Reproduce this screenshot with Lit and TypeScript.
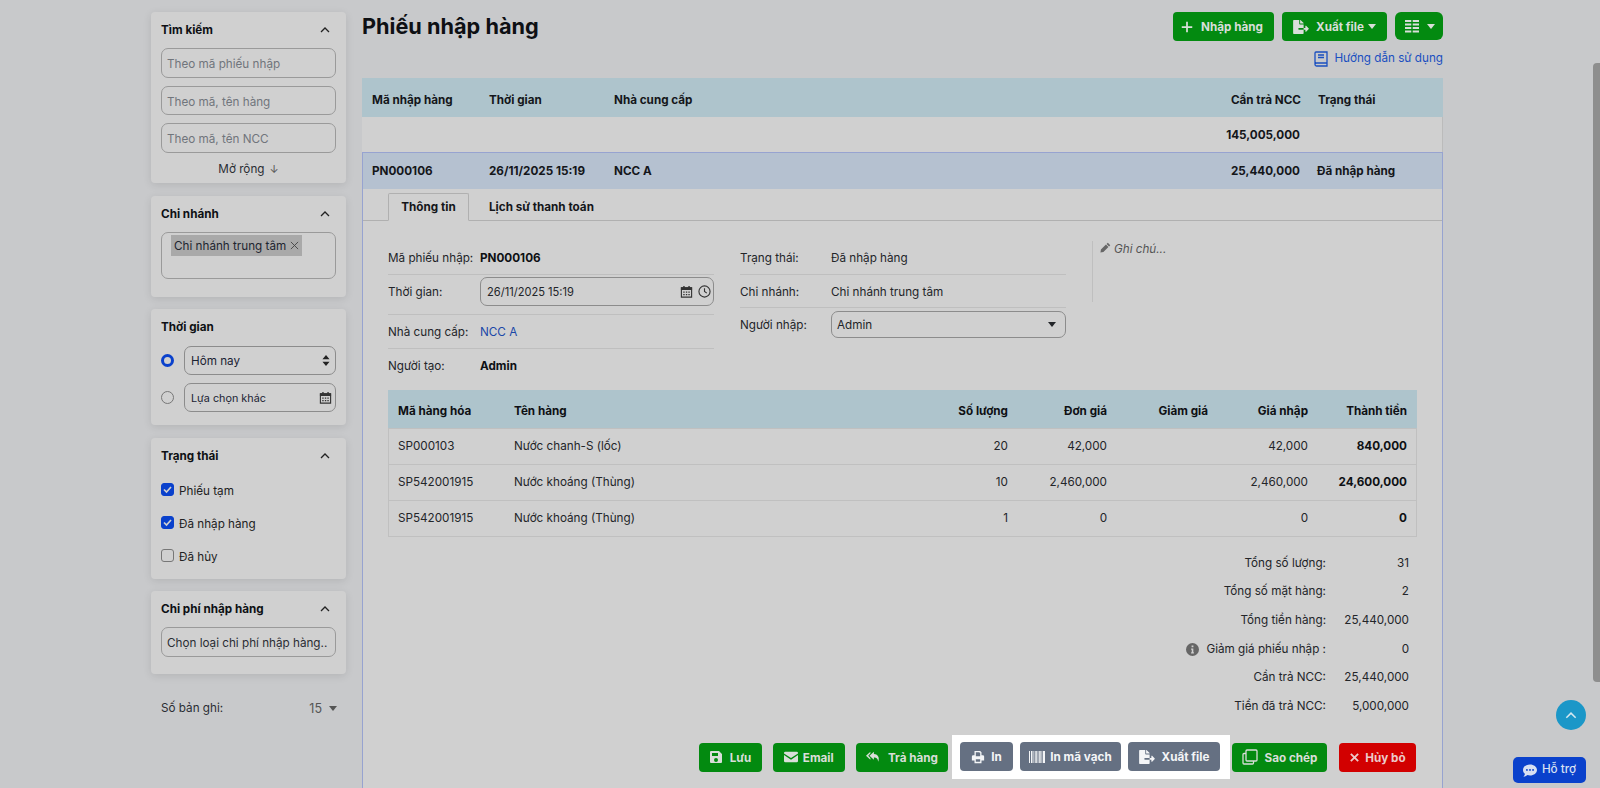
import { LitElement, html, css, svg } from "lit";
import { customElement } from "lit/decorators.js";

const icons: Record<string, any> = {
  plus: svg`<svg class="ic" viewBox="0 0 16 16"><path d="M8 2v12M2 8h12" stroke="currentColor" stroke-width="2" fill="none"/></svg>`,
  file: svg`<svg class="ic w" viewBox="0 0 576 512"><path fill="currentColor" d="M384 121.9c0-6.3-2.5-12.4-7-16.9L279.1 7c-4.5-4.5-10.6-7-17-7H256v128h128v-6.1zM192 336v-32c0-8.84 7.16-16 16-16h176V160H248c-13.2 0-24-10.8-24-24V0H24C10.7 0 0 10.7 0 24v464c0 13.3 10.7 24 24 24h336c13.3 0 24-10.7 24-24V352H208c-8.84 0-16-7.16-16-16zm379.05-28.02l-95.7-96.4c-10.06-10.14-27.36-3.01-27.36 11.27V288H384v64h63.99v65.18c0 14.28 17.29 21.41 27.36 11.27l95.7-96.4c6.6-6.66 6.6-17.4 0-24.07z"/></svg>`,
  list: svg`<svg class="ic w" viewBox="0 0 16 14"><path fill="currentColor" d="M1 1h6.300v2H1zM8.700 1H15v2H8.700zM1 4.500h6.300v2H1zM8.700 4.500H15v2H8.700zM1 8h6.300v2H1zM8.700 8H15v2H8.700zM1 11.500h6.300v2H1zM8.700 11.500H15v2H8.700z"/></svg>`,
  save: svg`<svg class="ic" viewBox="0 0 14 14"><path fill="currentColor" fill-rule="evenodd" d="M2 1h8l3 3v8a1 1 0 0 1-1 1H2a1 1 0 0 1-1-1V2a1 1 0 0 1 1-1zm1 2v3h6V3zm4 5a2 2 0 1 0 0 4 2 2 0 0 0 0-4z"/></svg>`,
  mail: svg`<svg class="ic" viewBox="0 0 16 12"><path fill="currentColor" d="M1.500 0h13A1.500 1.500 0 0 1 16 1.500v.4L8 7.200 0 1.900v-.4A1.500 1.500 0 0 1 1.500 0zM0 3.700l8 5.300 8-5.300v6.800a1.500 1.500 0 0 1-1.500 1.500h-13A1.500 1.500 0 0 1 0 10.500z"/></svg>`,
  reply: svg`<svg class="ic" viewBox="0 0 16 14"><path fill="currentColor" d="M5 1 0 5.500 5 10V8L2.500 5.500 5 3zM9 1 4 5.500 9 10V7.500c3 0 4.500 1 5 5 1.500-4.500.5-8.500-5-9z"/></svg>`,
  print: svg`<svg class="ic" viewBox="0 0 16 16"><path fill="currentColor" fill-rule="evenodd" d="M4 1h6.500L12 2.500V6h1.500A1.500 1.500 0 0 1 15 7.500V12h-3v3H4v-3H1V7.500A1.500 1.500 0 0 1 2.500 6H4zm1.500 1.500V7h5V3h-.8V2.500zm0 8v3h5v-3z"/></svg>`,
  barcode: svg`<svg class="ic w" viewBox="0 0 16 12"><path fill="currentColor" d="M0 0h1v12H0zM2 0h1.500v12H2zM4.500 0h.8v12h-.8zM6.300 0h1.500v12H6.300zM8.600 0h.8v12h-.8zM10.200 0h1.500v12h-1.500zM12.500 0h.8v12h-.8zM14 0h2v12h-2z"/></svg>`,
  clone: svg`<svg class="ic lg" viewBox="0 0 16 16"><path fill="none" stroke="currentColor" stroke-width="1.300" d="M5 1h9a1 1 0 0 1 1 1v9a1 1 0 0 1-1 1H5a1 1 0 0 1-1-1V2a1 1 0 0 1 1-1zM4 4.500H2a1 1 0 0 0-1 1V14a1 1 0 0 0 1 1h8.500a1 1 0 0 0 1-1v-2"/></svg>`,
  times: svg`<svg class="ic sm" viewBox="0 0 12 12"><path d="M2 2l8 8M10 2l-8 8" stroke="currentColor" stroke-width="2" fill="none"/></svg>`,
  book: svg`<svg class="ic lg" viewBox="0 0 14 16"><path fill="none" stroke="currentColor" stroke-width="1.300" d="M1 13.500V2a1 1 0 0 1 1-1h11v11H2.500a1.500 1.500 0 0 0 0 3H13v-3M4 4h6M4 6.500h6"/></svg>`,
  chev: svg`<svg class="chev" viewBox="0 0 10 6"><path d="M1 5l4-4 4 4" stroke="currentColor" stroke-width="1.300" fill="none"/></svg>`,
  x: svg`<svg class="x" viewBox="0 0 10 10"><path d="M1 1l8 8M9 1l-8 8" stroke="currentColor" stroke-width="1" fill="none"/></svg>`,
  cal: svg`<svg class="cal" viewBox="0 0 14 14"><path fill="none" stroke="currentColor" stroke-width="1.200" d="M1.500 3h11v10h-11z"/><path fill="currentColor" d="M1 2.500h12v3H1zM3.500 1h1.500v2H3.500zM9 1h1.500v2H9zM3.500 7h1.500v1.300H3.500zM6.300 7h1.500v1.300H6.300zM9 7h1.500v1.300H9zM3.500 9.700h1.500V11H3.500zM6.300 9.700h1.500V11H6.300zM9 9.700h1.500V11H9z"/></svg>`,
  clock: svg`<svg class="cal" viewBox="0 0 14 14"><circle cx="7" cy="7" r="6" fill="none" stroke="currentColor" stroke-width="1.200"/><path d="M7 3.500V7l2.500 1.800" fill="none" stroke="currentColor" stroke-width="1.200"/></svg>`,
  sort: svg`<svg class="sort" viewBox="0 0 10 14"><path fill="currentColor" d="M5 0l4.500 5.500h-9zM5 14L.5 8.500h9z"/></svg>`,
  pencil: svg`<svg class="pen" viewBox="0 0 12 12"><path fill="currentColor" d="M8.500.8l2.700 2.700-1.300 1.300-2.700-2.700zM6.500 2.800l2.700 2.700L3.700 11 .5 11.500 1 8.300z"/></svg>`,
  info: svg`<svg class="info" viewBox="0 0 14 14"><path fill="currentColor" fill-rule="evenodd" d="M7 0a7 7 0 1 1 0 14A7 7 0 0 1 7 0zM6 2.700v2h2v-2zM5.500 6v1.200H6.200V10H5.500v1.200h3V10H7.900V6z"/></svg>`,
  chat: svg`<svg class="chat" viewBox="0 0 16 14"><path fill="currentColor" fill-rule="evenodd" d="M8 0c4.400 0 8 2.800 8 6.300s-3.600 6.300-8 6.300c-1 0-2-.1-2.900-.5C3.900 13 2.300 14 .5 14c1-1 1.600-2 1.800-3.200C.9 9.700 0 8.100 0 6.300 0 2.800 3.600 0 8 0zM4.500 5.200a1.100 1.100 0 1 0 0 2.200 1.100 1.100 0 0 0 0-2.200zm3.500 0a1.100 1.100 0 1 0 0 2.200 1.100 1.100 0 0 0 0-2.200zm3.500 0a1.100 1.100 0 1 0 0 2.200 1.100 1.100 0 0 0 0-2.200z"/></svg>`,
};

const items = [
  ["SP000103", "Nước chanh-S (lốc)", "20", "42,000", "", "42,000", "840,000"],
  ["SP542001915", "Nước khoáng (Thùng)", "10", "2,460,000", "", "2,460,000", "24,600,000"],
  ["SP542001915", "Nước khoáng (Thùng)", "1", "0", "", "0", "0"],
];
const totals = [
  ["Tổng số lượng:", "31"],
  ["Tổng số mặt hàng:", "2"],
  ["Tổng tiền hàng:", "25,440,000"],
  ["Giảm giá phiếu nhập :", "0"],
  ["Cần trả NCC:", "25,440,000"],
  ["Tiền đã trả NCC:", "5,000,000"],
];

@customElement("app-root")
export class AppRoot extends LitElement {
  static styles = css`
    :host { display: block; position: relative; width: 1600px; height: 788px; overflow: hidden; background: #c8c9cb; color: #14161a; font: 11.700px/1.3 Inter, "Noto Sans", sans-serif; }
    * { box-sizing: border-box; }
    .page { display: flex; gap: 16px; padding: 12px 0 0 151px; }
    .side { width: 195px; flex: none; display: flex; flex-direction: column; gap: 12.500px; }
    .card { background: #d0d0d0; border-radius: 4px; box-shadow: 0 2px 8px rgba(0,0,0,.1); padding: 0 10px; }
    .c1 { height: 171px; } .c2 { height: 101px; } .c3 { height: 116px; } .c4 { height: 141px; } .c5 { height: 83px; }
    .ct { display: flex; justify-content: space-between; align-items: center; height: 36px; font-weight: 700; color: #0e1014; }
    .ct > span { padding-top: 2px; }
    .chev { width: 10px; height: 6px; margin-right: 6px; color: #222; }
    .stack { display: flex; flex-direction: column; gap: 8px; }
    .inp { height: 29.500px; border: 1px solid #9a9a9a; border-radius: 7px; display: flex; align-items: center; padding: 4px 5px 0; color: #70757c; white-space: nowrap; overflow: hidden; }
    .inp.dark { color: #2a2d33; }
    .more { height: 30px; display: flex; justify-content: center; align-items: center; gap: 5px; color: #2a2d33; padding-top: 4px; }
    .arrow { font-size: 11px; color: #555; }
    .box { height: 47px; border: 1px solid #9a9a9a; border-radius: 7px; padding: 2px 9px; }
    .tag { display: inline-flex; align-items: center; gap: 4px; height: 21px; padding: 3px 3px 0; background: #a9a9a9; color: #1e2530; }
    .x { width: 9px; height: 9px; color: #444; flex: none; margin-top: -3px; }
    .rr { display: flex; align-items: center; gap: 10px; }
    .radio { width: 13px; height: 13px; border-radius: 50%; flex: none; border: 1px solid #777; }
    .radio.on { border: 3.500px solid #0a41cc; background: #d0d0d0; }
    .sel { flex: 1; height: 29px; border: 1px solid #8c8c8c; border-radius: 7px; display: flex; justify-content: space-between; align-items: center; padding: 0 3px 0 6px; color: #1b2333; }
    .sel > span { padding-top: 3px; }
    .small { font-size: 10.800px; }
    .sort { width: 8px; height: 11px; margin-right: 2px; color: #222; }
    .cal { width: 13px; height: 13px; color: #333; flex: none; }
    .time { display: flex; flex-direction: column; gap: 8px; padding-top: 1px; }
    .chk { display: flex; align-items: center; gap: 5px; height: 33px; color: #222; padding-top: 5px; }
    .cb { width: 13px; height: 13px; border-radius: 3px; border: 1px solid #777; flex: none; display: flex; margin-top: -5px; }
    .cb.on { background: #0a41cc; border-color: #0a41cc; color: #d0d0d0; }
    .cb svg { width: 11px; height: 11px; }
    .checks { margin-top: -1px; }
    .count { display: flex; justify-content: space-between; align-items: center; padding: 14px 9px 0 10px; color: #2b2e33; }
    .cv { display: flex; align-items: center; gap: 7px; color: #555; font-size: 12.500px; }
    .caret { width: 0; height: 0; border: 4.500px solid transparent; border-top: 5px solid currentColor; border-bottom: 0; display: inline-block; flex: none; }
    .main { width: 1081px; flex: none; }
    .head { display: flex; justify-content: space-between; height: 29px; }
    h1 { margin: 0; font-size: 21.700px; line-height: 28px; font-weight: 700; color: #0e1014; }
    .btns { display: flex; gap: 8px; }
    .btn { height: 29px; border-radius: 4px; background: #038a10; color: #d9ded9; display: inline-flex; align-items: center; justify-content: center; gap: 7px; font-weight: 700; font-size: 11.700px; white-space: nowrap; padding-top: 2px; }
    .btn > svg, .btn > .caret { margin-top: -2px; }
    .btn.gray { background: #657082; color: #f4f5f7; }
    .btn.red { background: #d20000; color: #eccaca; }
    .btn.icon { width: 48px; border-radius: 6px; height: 28px; }
    .w100 { width: 101px; padding-right: 4px; } .w105 { width: 105px; }
    .w105 .caret { margin-left: -3px; }
    .wsave { width: 63px; } .wmail { width: 72.500px; gap: 5px; } .wback { width: 92px; gap: 8px; }
    .wprint { width: 53px; gap: 6px; } .wbar { width: 101px; gap: 5px; } .wfile { width: 92px; }
    .wcopy { width: 95px; } .wcancel { width: 77px; gap: 5px; }
    .ic { width: 14px; height: 14px; flex: none; }
    .ic.w { width: 16px; }
    .ic.lg { width: 16px; height: 16px; }
    .ic.sm { width: 11px; height: 11px; }
    .link { display: flex; justify-content: flex-end; align-items: center; gap: 5px; height: 37px; padding-bottom: 1px; color: #1a4fc0; }
    .tr { display: grid; grid-template-columns: 117px 125px 1fr 120px 134px; align-items: center; padding-left: 10px; }
    .thead { height: 39px; background: #aec4cc; font-weight: 700; padding-top: 6px; }
    .ttotal { height: 35px; background: #d0d0d0; font-weight: 700; border-right: 1px solid #bbb; padding-top: 2px; }
    .num { text-align: right; padding-right: 8px; }
    .tr .st { padding-left: 9px; }
    .panel { border: 1px solid #97a3d0; border-bottom: 0; background: #d0d0d0; height: 640px; }
    .tsel { height: 36px; background: #b5c1d0; font-weight: 700; padding-left: 9px; padding-top: 2px; }
    .tabs { display: flex; height: 32px; align-items: flex-end; padding-left: 25px; border-bottom: 1px solid #b0b0b0; font-weight: 700; }
    .tab { height: 28px; display: flex; align-items: center; padding: 2px 20px 0; margin-bottom: -1px; }
    .tab.on { width: 81px; padding: 2px 0 0; justify-content: center; border: 1px solid #b0b0b0; border-bottom: 1px solid #d0d0d0; border-radius: 2px 2px 0 0; }
    .info-grid { display: flex; gap: 26px; padding: 20px 0 0 25px; height: 169px; }
    .col { width: 326px; flex: none; }
    .row { display: flex; align-items: center; border-bottom: 1px solid #bfbfbf; color: #232529; }
    .row > span { padding-top: 3px; }
    .row.plain { border-bottom: 0; }
    .row .lb { width: 92px; flex: none; }
    .c-b .lb { width: 91px; }
    .r1 { height: 34px; } .r2 { height: 40px; padding-bottom: 8px; padding-top: 2px; } .r3 { height: 34px; } .r4 { height: 33px; }
    .r2b { height: 33px; } .r3b { height: 32px; }
    .bold { font-weight: 700; color: #0e1014; }
    .bl { color: #1b48a8; }
    .field { flex: 1; height: 29px; border: 1px solid #8c8c8c; border-radius: 7px; display: flex; align-items: center; padding: 0 2px 0 6px; gap: 5px; font-size: 11.100px; }
    .field .t { flex: 1; padding-top: 2px; }
    .field.dd { height: 27px; padding: 0 9px 0 5px; font-size: 11.700px; }
    .field.dd .t { padding-top: 3px; }
    .note { border-left: 1px solid #bfbfbf; height: 61px; padding: 0 0 0 7px; display: flex; gap: 3px; align-items: flex-start; font-style: italic; color: #555; line-height: 16px; }
    .pen { width: 11px; height: 11px; flex: none; color: #666; margin-top: 1px; }
    .dt { margin: 0 25px; border: 1px solid #c0c0c0; border-top: 0; }
    .dr { display: grid; grid-template-columns: 116px 1fr 100px 99px 101px 100px 99px; align-items: center; height: 36px; border-top: 1px solid #c0c0c0; color: #232529; }
    .dr > div { padding: 0 9px; white-space: nowrap; }
    .dr.h { height: 38px; background: #aec4cc; font-weight: 700; color: #0e1014; border-top: 0; margin: 0 -1px; padding: 5px 1px 0; }
    .r { text-align: right; }
    .sum { display: grid; grid-template-columns: auto 83px; justify-content: end; grid-auto-rows: 28.700px; padding: 12px 33px 0 0; align-items: center; color: #232529; }
    .sum .l { display: flex; justify-content: flex-end; align-items: center; gap: 7px; }
    .sum .v { text-align: right; }
    .info { width: 13px; height: 13px; color: #666; }
    .foot { display: flex; justify-content: flex-end; align-items: center; padding: 14px 26px 0 0; }
    .foot .btn { margin-left: 11px; }
    .foot .btn.red { margin-left: 12px; }
    .spot { background: #fff; display: flex; gap: 7px; padding: 7px 10px 8px 8px; margin: 0 2px 0 4px; }
    .foot .spot .btn { margin: 0; }
    .foot .spot + .btn { margin-left: 0; }
    .thumb { position: absolute; right: 0; top: 63px; width: 7px; height: 619px; background: #8e8e8e; border-radius: 4px 0 0 4px; }
    .totop { position: absolute; left: 1556px; top: 700px; width: 30px; height: 30px; border-radius: 50%; background: #1b97c8; color: #d5e8f0; display: flex; align-items: center; justify-content: center; }
    .totop .chev { margin: 0; color: inherit; width: 12px; height: 7px; }
    .help { position: absolute; left: 1513px; top: 757px; width: 73px; height: 26px; border-radius: 5px; background: #0a41cc; color: #d8e0f2; display: flex; align-items: center; justify-content: center; gap: 5px; font-weight: 500; }
    .chat { width: 14px; height: 13px; }
  `;

  private card(title: string, cls: string, body: unknown, chev = true) {
    return html`<section class="card ${cls}">
      <div class="ct"><span>${title}</span>${chev ? icons.chev : ""}</div>${body}
    </section>`;
  }

  private check(on: boolean, label: string) {
    return html`<div class="chk"><span class="cb ${on ? "on" : ""}">${on
      ? svg`<svg viewBox="0 0 11 11"><path d="M2 5.500l2.500 2.500L9 3" stroke="currentColor" stroke-width="1.700" fill="none"/></svg>`
      : ""}</span>${label}</div>`;
  }

  private btn(label: string, icon: string, cls = "") {
    return html`<span class="btn ${cls}">${icons[icon]}${label}</span>`;
  }

  render() {
    return html`
      <div class="page">
        <aside class="side">
          ${this.card("Tìm kiếm", "c1", html`
            <div class="stack">
              <div class="inp">Theo mã phiếu nhập</div>
              <div class="inp">Theo mã, tên hàng</div>
              <div class="inp">Theo mã, tên NCC</div>
            </div>
            <div class="more">Mở rộng <span class="arrow">↓</span></div>`)}
          ${this.card("Chi nhánh", "c2", html`
            <div class="box"><span class="tag">Chi nhánh trung tâm ${icons.x}</span></div>`)}
          ${this.card("Thời gian", "c3", html`
            <div class="time">
              <div class="rr"><span class="radio on"></span><div class="sel"><span>Hôm nay</span>${icons.sort}</div></div>
              <div class="rr"><span class="radio"></span><div class="sel small"><span>Lựa chọn khác</span>${icons.cal}</div></div>
            </div>`, false)}
          ${this.card("Trạng thái", "c4", html`
            <div class="checks">
              ${this.check(true, "Phiếu tạm")}
              ${this.check(true, "Đã nhập hàng")}
              ${this.check(false, "Đã hủy")}
            </div>`)}
          ${this.card("Chi phí nhập hàng", "c5", html`
            <div class="inp dark">Chọn loại chi phí nhập hàng..</div>`)}
          <div class="count"><span>Số bản ghi:</span><span class="cv">15 <i class="caret"></i></span></div>
        </aside>

        <main class="main">
          <div class="head">
            <h1>Phiếu nhập hàng</h1>
            <div class="btns">
              ${this.btn("Nhập hàng", "plus", "w100")}
              <span class="btn w105">${icons.file}Xuất file<i class="caret"></i></span>
              <span class="btn icon">${icons.list}<i class="caret"></i></span>
            </div>
          </div>
          <div class="link">${icons.book}Hướng dẫn sử dụng</div>

          <div class="tr thead"><span>Mã nhập hàng</span><span>Thời gian</span><span>Nhà cung cấp</span><span class="num">Cần trả NCC</span><span class="st">Trạng thái</span></div>
          <div class="tr ttotal"><span></span><span></span><span></span><span class="num">145,005,000</span><span></span></div>

          <div class="panel">
            <div class="tr tsel"><span>PN000106</span><span>26/11/2025 15:19</span><span>NCC A</span><span class="num">25,440,000</span><span class="st">Đã nhập hàng</span></div>
            <div class="tabs"><div class="tab on">Thông tin</div><div class="tab">Lịch sử thanh toán</div></div>

            <div class="info-grid">
              <div class="col">
                <div class="row r1"><span class="lb">Mã phiếu nhập:</span><span class="bold">PN000106</span></div>
                <div class="row r2"><span class="lb">Thời gian:</span><div class="field"><span class="t">26/11/2025 15:19</span>${icons.cal}${icons.clock}</div></div>
                <div class="row r3"><span class="lb">Nhà cung cấp:</span><span class="bl">NCC A</span></div>
                <div class="row r4 plain"><span class="lb">Người tạo:</span><span class="bold">Admin</span></div>
              </div>
              <div class="col c-b">
                <div class="row r1"><span class="lb">Trạng thái:</span><span>Đã nhập hàng</span></div>
                <div class="row r2b"><span class="lb">Chi nhánh:</span><span>Chi nhánh trung tâm</span></div>
                <div class="row r3b plain"><span class="lb">Người nhập:</span><div class="field dd"><span class="t">Admin</span><i class="caret"></i></div></div>
              </div>
              <div class="note">${icons.pencil}<span>Ghi chú...</span></div>
            </div>

            <div class="dt">
              <div class="dr h"><div>Mã hàng hóa</div><div>Tên hàng</div><div class="r">Số lượng</div><div class="r">Đơn giá</div><div class="r">Giảm giá</div><div class="r">Giá nhập</div><div class="r">Thành tiền</div></div>
              ${items.map((i) => html`<div class="dr"><div>${i[0]}</div><div>${i[1]}</div><div class="r">${i[2]}</div><div class="r">${i[3]}</div><div class="r">${i[4]}</div><div class="r">${i[5]}</div><div class="r bold">${i[6]}</div></div>`)}
            </div>

            <div class="sum">
              ${totals.map((t, n) => html`<div class="l">${n === 3 ? icons.info : ""}${t[0]}</div><div class="v">${t[1]}</div>`)}
            </div>

            <div class="foot">
              ${this.btn("Lưu", "save", "wsave")}
              ${this.btn("Email", "mail", "wmail")}
              ${this.btn("Trả hàng", "reply", "wback")}
              <div class="spot">
                ${this.btn("In", "print", "gray wprint")}
                ${this.btn("In mã vạch", "barcode", "gray wbar")}
                ${this.btn("Xuất file", "file", "gray wfile")}
              </div>
              ${this.btn("Sao chép", "clone", "wcopy")}
              ${this.btn("Hủy bỏ", "times", "red wcancel")}
            </div>
          </div>
        </main>
      </div>
      <div class="thumb"></div>
      <div class="totop">${icons.chev}</div>
      <div class="help">${icons.chat}Hỗ trợ</div>
    `;
  }
}
